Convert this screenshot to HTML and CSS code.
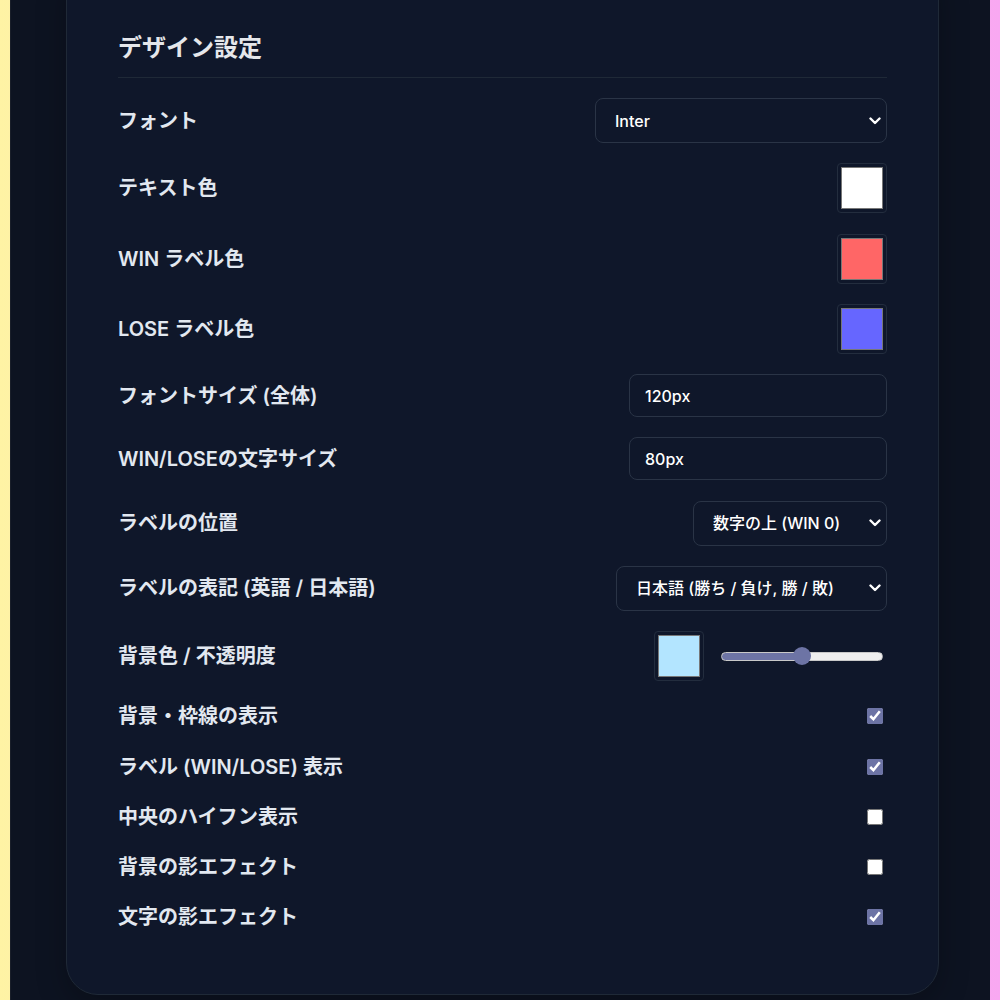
FILE: index.html
```html
<!DOCTYPE html>
<html lang="ja">
<head>
<meta charset="utf-8">
<title>デザイン設定</title>
<link rel="stylesheet" href="styles.css">
</head>
<body>
<div class="frame">
  <div class="stage">
    <section class="card">
      <h2 class="card-title">デザイン設定</h2>
      <div class="rows">
        <div class="row">
          <label class="label">フォント</label>
          <div class="select-wrap">
            <select class="select sel-font">
              <option>Inter</option>
              <option>Noto Sans JP</option>
            </select>
            <svg class="chev" viewBox="0 0 12 8" width="12" height="8"><polyline points="1.5,1.5 6,6 10.5,1.5" fill="none" stroke="#ffffff" stroke-width="2.4" stroke-linecap="round" stroke-linejoin="round"/></svg>
          </div>
        </div>
        <div class="row">
          <label class="label">テキスト色</label>
          <input class="swatch" type="color" value="#ffffff">
        </div>
        <div class="row">
          <label class="label">WIN ラベル色</label>
          <input class="swatch" type="color" value="#ff6666">
        </div>
        <div class="row">
          <label class="label">LOSE ラベル色</label>
          <input class="swatch" type="color" value="#6666ff">
        </div>
        <div class="row">
          <label class="label">フォントサイズ (全体)</label>
          <input class="text-input" type="text" value="120px">
        </div>
        <div class="row">
          <label class="label">WIN/LOSEの文字サイズ</label>
          <input class="text-input" type="text" value="80px">
        </div>
        <div class="row">
          <label class="label">ラベルの位置</label>
          <div class="select-wrap">
            <select class="select sel-pos">
              <option>数字の上 (WIN 0)</option>
            </select>
            <svg class="chev" viewBox="0 0 12 8" width="12" height="8"><polyline points="1.5,1.5 6,6 10.5,1.5" fill="none" stroke="#ffffff" stroke-width="2.4" stroke-linecap="round" stroke-linejoin="round"/></svg>
          </div>
        </div>
        <div class="row">
          <label class="label">ラベルの表記 (英語 / 日本語)</label>
          <div class="select-wrap">
            <select class="select sel-lang">
              <option>日本語 (勝ち / 負け, 勝 / 敗)</option>
            </select>
            <svg class="chev" viewBox="0 0 12 8" width="12" height="8"><polyline points="1.5,1.5 6,6 10.5,1.5" fill="none" stroke="#ffffff" stroke-width="2.4" stroke-linecap="round" stroke-linejoin="round"/></svg>
          </div>
        </div>
        <div class="row">
          <label class="label">背景色 / 不透明度</label>
          <div class="bg-controls">
            <input class="swatch" type="color" value="#b3e5ff">
            <input class="range" type="range" min="0" max="100" value="50">
          </div>
        </div>
        <div class="row row-check">
          <label class="label">背景・枠線の表示</label>
          <input class="check" type="checkbox" checked>
        </div>
        <div class="row row-check">
          <label class="label">ラベル (WIN/LOSE) 表示</label>
          <input class="check" type="checkbox" checked>
        </div>
        <div class="row row-check">
          <label class="label">中央のハイフン表示</label>
          <input class="check" type="checkbox">
        </div>
        <div class="row row-check">
          <label class="label">背景の影エフェクト</label>
          <input class="check" type="checkbox">
        </div>
        <div class="row row-check">
          <label class="label">文字の影エフェクト</label>
          <input class="check" type="checkbox" checked>
        </div>
      </div>
    </section>
  </div>
</div>
</body>
</html>
```
FILE: styles.css
```css
html, body {
  margin: 0;
  padding: 0;
  height: 100%;
}
body {
  background: linear-gradient(90deg, #fef3a4 0%, #fbcbd0 50%, #f9a8f2 100%);
  font-family: Inter, "Noto Sans CJK JP", sans-serif;
  overflow: hidden;
}
.frame {
  margin: 0 10px;
  height: 100%;
  box-sizing: border-box;
  background: #0d1321;
  border-left: 1px solid #1a1f2a;
  overflow: hidden;
}
.stage {
  display: flow-root;
  padding: 0 51px 0 55px;
}
.card {
  margin-top: -40px;
  background: #0f172a;
  border: 1px solid #1f2937;
  border-radius: 32px;
  padding: 69px 51px 62px 51px;
  box-shadow: 0 10px 30px rgba(0, 0, 0, 0.25);
  color: #e2e8f0;
}
.card-title {
  margin: 0 0 20px 0;
  font-size: 24px;
  line-height: 36px;
  font-weight: 700;
  color: #e5e7eb;
  padding-bottom: 11px;
  border-bottom: 1px solid #1f2937;
}
.rows {
  display: flex;
  flex-direction: column;
  gap: 20.25px;
}
.row {
  display: flex;
  align-items: center;
  justify-content: space-between;
  min-height: 30px;
}
.label {
  font-size: 20px;
  font-weight: 600;
  line-height: 30px;
  color: #e2e8f0;
}
.select-wrap {
  position: relative;
  display: flex;
}
.chev {
  position: absolute;
  right: 6px;
  top: 50%;
  margin-top: -4px;
  pointer-events: none;
}
.select {
  appearance: none;
  -webkit-appearance: none;
  height: 45px;
  box-sizing: border-box;
  background: #0f172a;
  color: #ffffff;
  border: 1px solid #2a3446;
  border-radius: 8px;
  padding: 0 24px 0 19px;
  font-family: Inter, "Noto Sans CJK JP", sans-serif;
  font-size: 16px;
  font-weight: 500;
  outline: none;
}
.sel-font { width: 292px; }
.sel-pos { width: 194px; }
.sel-lang { width: 271px; }
.text-input {
  width: 258px;
  height: 43px;
  box-sizing: border-box;
  background: #0f172a;
  color: #ffffff;
  border: 1px solid #2a3446;
  border-radius: 8px;
  padding: 0 15px;
  font-family: Inter, "Noto Sans CJK JP", sans-serif;
  font-size: 16px;
  font-weight: 500;
  outline: none;
}
.swatch {
  -webkit-appearance: none;
  appearance: none;
  width: 50px;
  height: 50px;
  box-sizing: border-box;
  margin: 0;
  padding: 3px;
  background: #0f172a;
  border: 1px solid #232d3e;
  border-radius: 4px;
  cursor: pointer;
}
.swatch::-webkit-color-swatch-wrapper {
  padding: 0;
}
.swatch::-webkit-color-swatch {
  border: 1px solid #777777;
  border-radius: 0;
}
.bg-controls {
  display: flex;
  align-items: center;
  gap: 17px;
}
.range {
  -webkit-appearance: none;
  appearance: none;
  width: 162px;
  height: 18px;
  margin: 0 4px 0 0;
  background: transparent;
}
.range::-webkit-slider-runnable-track {
  height: 9px;
  border-radius: 5px;
  background: linear-gradient(90deg, #6d74a5 0%, #6d74a5 50%, #efefef 50%, #efefef 100%);
  border: 1px solid #c9c9c9;
  box-sizing: border-box;
}
.range::-webkit-slider-thumb {
  -webkit-appearance: none;
  appearance: none;
  width: 18px;
  height: 18px;
  border-radius: 50%;
  background: #6d74a5;
  margin-top: -5.5px;
  border: none;
}
.check {
  width: 16px;
  height: 16px;
  margin: 0 4px 0 0;
  accent-color: #6d74a5;
}
```
